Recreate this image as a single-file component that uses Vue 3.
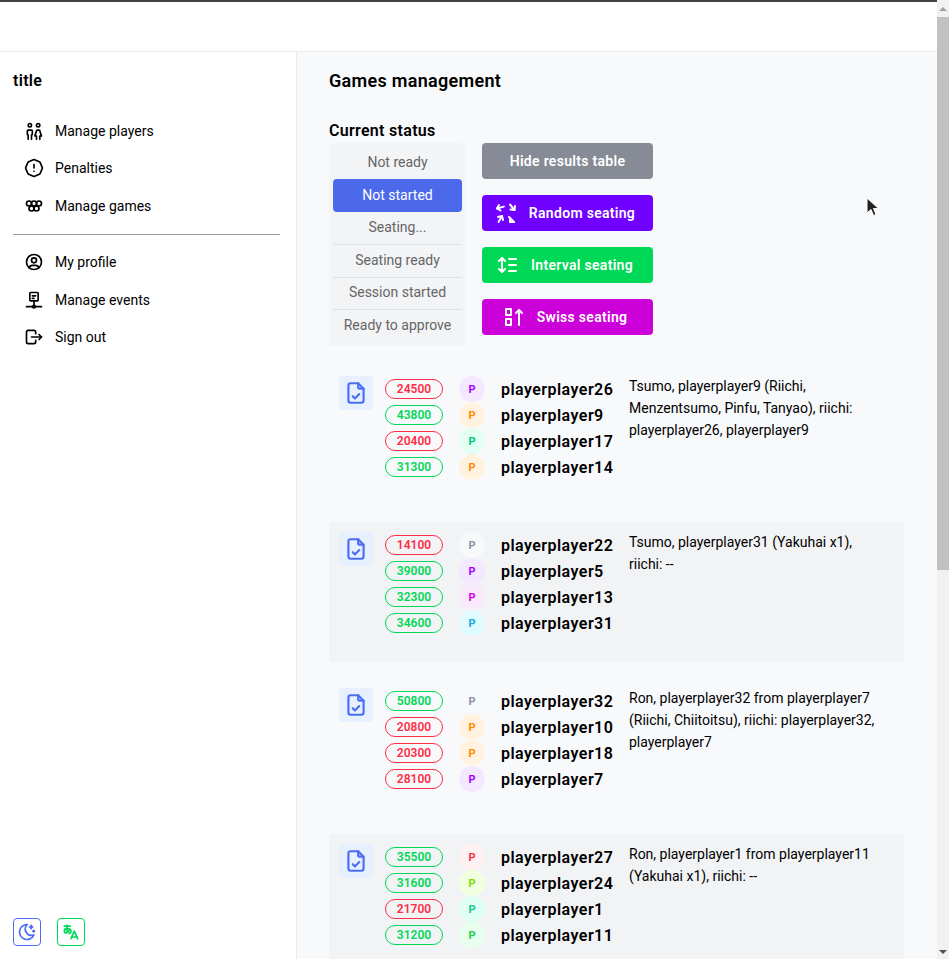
<template>
  <div class="page">
    <div class="topbar"></div>
    <div class="layout">
      <aside class="sidebar">
        <div class="side-title">title</div>
        <nav class="nav">
          <a v-for="item in navTop" :key="item.label" class="nav-item">
            <svg class="nav-icon" viewBox="0 0 24 24"><path v-for="d in icons[item.icon]" :key="d" :d="d" /></svg>
            <span>{{ item.label }}</span>
          </a>
        </nav>
        <div class="divider"></div>
        <nav class="nav">
          <a v-for="item in navBottom" :key="item.label" class="nav-item">
            <svg class="nav-icon" viewBox="0 0 24 24"><path v-for="d in icons[item.icon]" :key="d" :d="d" /></svg>
            <span>{{ item.label }}</span>
          </a>
        </nav>
        <div class="side-actions">
          <button class="square blue">
            <svg viewBox="0 0 24 24"><path v-for="d in icons.moon" :key="d" :d="d" /></svg>
          </button>
          <button class="square green">
            <svg viewBox="0 0 24 24"><path v-for="d in icons.lang" :key="d" :d="d" /></svg>
          </button>
        </div>
      </aside>

      <main class="main">
        <h2 class="heading">Games management</h2>
        <div class="status-title">Current status</div>
        <div class="controls">
          <div class="statuses">
            <div
              v-for="s in statuses"
              :key="s.label"
              class="status"
              :class="{ active: s.active, sep: s.sep }"
            >{{ s.label }}</div>
          </div>
          <div class="buttons">
            <button
              v-for="b in buttons"
              :key="b.label"
              class="action"
              :class="{ 'with-icon': b.icon }"
              :style="{ background: b.color }"
            >
              <svg v-if="b.icon" viewBox="0 0 24 24"><path v-for="d in icons[b.icon]" :key="d" :d="d" /></svg>
              <span>{{ b.label }}</span>
            </button>
          </div>
        </div>

        <div class="games">
          <div v-for="(g, i) in games" :key="i" class="game" :class="{ odd: i % 2 === 1 }">
            <div class="file-badge">
              <svg viewBox="0 0 24 24"><path v-for="d in icons.file" :key="d" :d="d" /></svg>
            </div>
            <div class="players">
              <div v-for="p in g.players" :key="p.name" class="player">
                <span class="pill" :class="p.score >= 30000 ? 'win' : 'lose'">{{ p.score }}</span>
                <span class="avatar" :style="{ background: p.bg, color: p.fg }">P</span>
                <span class="name">{{ p.name }}</span>
              </div>
            </div>
            <div class="outcome">{{ g.text }}</div>
          </div>
        </div>
      </main>
    </div>

    <div class="scrollbar">
      <div class="sb-arrow up"></div>
      <div class="sb-thumb"></div>
      <div class="sb-arrow down"></div>
    </div>
    <svg class="cursor" viewBox="0 0 14 22">
      <path d="M1 1v15l4-3.500 2.500 6 2.500-1-2.500-6h5z" fill="#222" stroke="#fff" stroke-width="1" />
    </svg>
  </div>
</template>

<script setup>
const icons = {
  friends: [
    'M7 5m-2 0a2 2 0 1 0 4 0a2 2 0 1 0 -4 0',
    'M5 22v-5l-1 -1v-4a1 1 0 0 1 1 -1h4a1 1 0 0 1 1 1v4l-1 1v5',
    'M17 5m-2 0a2 2 0 1 0 4 0a2 2 0 1 0 -4 0',
    'M15 22v-4h-2l2 -6a1 1 0 0 1 1 -1h2a1 1 0 0 1 1 1l2 6h-2v4'
  ],
  alert: [
    'M12.802 2.165l5.575 2.389c.48 .206 .863 .589 1.07 1.07l2.388 5.574c.22 .512 .22 1.092 0 1.604l-2.389 5.575c-.206 .48 -.589 .863 -1.07 1.07l-5.574 2.388c-.512 .22 -1.092 .22 -1.604 0l-5.575 -2.389a2.036 2.036 0 0 1 -1.07 -1.07l-2.388 -5.574a2.036 2.036 0 0 1 0 -1.604l2.389 -5.575c.206 -.48 .589 -.863 1.07 -1.07l5.574 -2.388a2.036 2.036 0 0 1 1.604 0z',
    'M12 8v4',
    'M12 16h.01'
  ],
  olympics: [
    'M6 9m-3 0a3 3 0 1 0 6 0a3 3 0 1 0 -6 0',
    'M18 9m-3 0a3 3 0 1 0 6 0a3 3 0 1 0 -6 0',
    'M12 9m-3 0a3 3 0 1 0 6 0a3 3 0 1 0 -6 0',
    'M9 15m-3 0a3 3 0 1 0 6 0a3 3 0 1 0 -6 0',
    'M15 15m-3 0a3 3 0 1 0 6 0a3 3 0 1 0 -6 0'
  ],
  user: [
    'M12 12m-9 0a9 9 0 1 0 18 0a9 9 0 1 0 -18 0',
    'M12 10m-3 0a3 3 0 1 0 6 0a3 3 0 1 0 -6 0',
    'M6.168 18.849a4 4 0 0 1 3.832 -2.849h4a4 4 0 0 1 3.834 2.855'
  ],
  events: [
    'M8 3h8a1 1 0 0 1 1 1v8a1 1 0 0 1 -1 1h-8a1 1 0 0 1 -1 -1v-8a1 1 0 0 1 1 -1z',
    'M10 7h4',
    'M10 10h2',
    'M12 13v5',
    'M12 20m-1.500 0a1.500 1.500 0 1 0 3 0a1.500 1.500 0 1 0 -3 0',
    'M3 20h7.500',
    'M13.500 20h7.500'
  ],
  logout: [
    'M14 8v-2a2 2 0 0 0 -2 -2h-7a2 2 0 0 0 -2 2v12a2 2 0 0 0 2 2h7a2 2 0 0 0 2 -2v-2',
    'M9 12h12l-3 -3',
    'M18 15l3 -3'
  ],
  file: [
    'M14 3v4a1 1 0 0 0 1 1h4',
    'M17 21h-10a2 2 0 0 1 -2 -2v-14a2 2 0 0 1 2 -2h7l5 5v11a2 2 0 0 1 -2 2z',
    'M9 15l2 2l4 -4'
  ],
  random: [
    'M20 21h-4v-4',
    'M20 21l-5 -5',
    'M6.500 9.504l-3.500 -2l2 -3.504',
    'M3 7.504l6.830 -1.870',
    'M4 16l4 -1l1 4',
    'M8 15l-3.500 6',
    'M21 5l-.5 4l-4 -.5',
    'M20.500 9l-4.500 -5.500'
  ],
  lineheight: [
    'M3 8l3 -3l3 3', 'M3 16l3 3l3 -3', 'M6 5v14',
    'M13 6h7', 'M13 12h7', 'M13 18h7'
  ],
  sort: [
    'M4 4h5v6h-5z', 'M4 14h5v6h-5z',
    'M17 20v-15', 'M14 8l3 -3l3 3'
  ],
  moon: [
    'M12 3c.132 0 .263 0 .393 0a7.500 7.500 0 0 0 7.920 12.446a9 9 0 1 1 -8.313 -12.454z',
    'M17 4a2 2 0 0 0 2 2a2 2 0 0 0 -2 2a2 2 0 0 0 -2 -2a2 2 0 0 0 2 -2',
    'M19 11h2m-1 -1v2'
  ],
  lang: [
    'M4 5h7',
    'M7 4c0 4.846 0 7 .5 8',
    'M10 8.500c0 2.286 -2 4.500 -3.500 4.500s-2.500 -1.135 -2.500 -2c0 -2 1 -3 3 -3s5 .57 5 2.500c0 1.500 -.5 2.500 -2 3.500',
    'M12 20l4 -9l4 9',
    'M19.100 18h-6.200'
  ]
}

const navTop = [
  { label: 'Manage players', icon: 'friends' },
  { label: 'Penalties', icon: 'alert' },
  { label: 'Manage games', icon: 'olympics' }
]
const navBottom = [
  { label: 'My profile', icon: 'user' },
  { label: 'Manage events', icon: 'events' },
  { label: 'Sign out', icon: 'logout' }
]

const statuses = [
  { label: 'Not ready' },
  { label: 'Not started', active: true },
  { label: 'Seating...' },
  { label: 'Seating ready', sep: true },
  { label: 'Session started', sep: true },
  { label: 'Ready to approve', sep: true }
]

const buttons = [
  { label: 'Hide results table', color: '#868b96' },
  { label: 'Random seating', color: '#7000ff', icon: 'random' },
  { label: 'Interval seating', color: '#00d858', icon: 'lineheight' },
  { label: 'Swiss seating', color: '#cc00d8', icon: 'sort' }
]

const violet = ['#f3e8ff', '#a800ff']
const orange = ['#fff3e0', '#ff8a00']
const teal = ['#e3fff3', '#00c87a']
const grey = ['#f8f9fa', '#8a94a6']
const magenta = ['#fae8fc', '#d400e8']
const cyan = ['#e0fbff', '#18a8d8']
const none = ['transparent', '#8a94a6']
const red = ['#fff0f2', '#f5304a']
const lime = ['#f0ffe0', '#80dc00']
const mint = ['#e0fff4', '#10c890']
const green = ['#e8ffee', '#20d050']

const p = (name, score, c) => ({ name, score, bg: c[0], fg: c[1] })

const games = [
  {
    players: [
      p('playerplayer26', 24500, violet),
      p('playerplayer9', 43800, orange),
      p('playerplayer17', 20400, teal),
      p('playerplayer14', 31300, orange)
    ],
    text: 'Tsumo, playerplayer9 (Riichi, Menzentsumo, Pinfu, Tanyao), riichi: playerplayer26, playerplayer9'
  },
  {
    players: [
      p('playerplayer22', 14100, grey),
      p('playerplayer5', 39000, violet),
      p('playerplayer13', 32300, magenta),
      p('playerplayer31', 34600, cyan)
    ],
    text: 'Tsumo, playerplayer31 (Yakuhai x1), riichi: --'
  },
  {
    players: [
      p('playerplayer32', 50800, none),
      p('playerplayer10', 20800, orange),
      p('playerplayer18', 20300, orange),
      p('playerplayer7', 28100, violet)
    ],
    text: 'Ron, playerplayer32 from playerplayer7 (Riichi, Chiitoitsu), riichi: playerplayer32, playerplayer7'
  },
  {
    players: [
      p('playerplayer27', 35500, red),
      p('playerplayer24', 31600, lime),
      p('playerplayer1', 21700, mint),
      p('playerplayer11', 31200, green)
    ],
    text: 'Ron, playerplayer1 from playerplayer11 (Yakuhai x1), riichi: --'
  }
]
</script>

<style>
html, body {
  height: 100%;
  overflow: hidden;
}
</style>

<style scoped>
.page {
  position: relative;
  width: 949px;
  height: 959px;
  overflow: hidden;
  background: #fff;
  font-family: Roboto, "Noto Sans", "Liberation Sans", sans-serif;
  font-size: 14px;
  color: #000;
}

.topbar {
  width: 937px;
  height: 52px;
  box-sizing: border-box;
  border-top: 2px solid #444;
  border-bottom: 1px solid #e9ecef;
}

.layout {
  display: flex;
  width: 937px;
  height: 907px;
}

.sidebar {
  width: 297px;
  flex: none;
  box-sizing: border-box;
  border-right: 1px solid #e9ecef;
  padding: 0 16px 0 13px;
  position: relative;
  display: flex;
  flex-direction: column;
}

.side-title {
  font-size: 16px;
  font-weight: 600;
  letter-spacing: 0.3px;
  margin-top: 18px;
  line-height: 22px;
}

.nav {
  display: flex;
  flex-direction: column;
}

.side-title + .nav {
  margin-top: 20px;
}

.nav-item {
  display: flex;
  align-items: center;
  gap: 11px;
  height: 37.5px;
  padding-left: 11px;
}

.nav-icon {
  width: 20px;
  height: 20px;
  fill: none;
  stroke: #000;
  stroke-width: 2;
  stroke-linecap: round;
  stroke-linejoin: round;
}

.divider {
  height: 1px;
  background: #999;
  margin: 9px 0;
}

.side-actions {
  margin-top: auto;
  margin-bottom: 13px;
  display: flex;
  gap: 16px;
}

.square {
  width: 28px;
  height: 28px;
  padding: 0;
  border-radius: 4px;
  background: transparent;
  display: flex;
  align-items: center;
  justify-content: center;
}

.square svg {
  width: 20px;
  height: 20px;
  fill: none;
  stroke: currentColor;
  stroke-width: 2;
  stroke-linecap: round;
  stroke-linejoin: round;
}

.square.blue {
  border: 1px solid #4c6ef5;
  color: #4c6ef5;
}

.square.green {
  border: 1px solid #00d858;
  color: #00d858;
}

.main {
  flex: 1;
  background: #f8f9fb;
  padding: 0 33px 0 32px;
  min-width: 0;
}

.heading {
  margin: 17px 0 0;
  font-size: 18px;
  line-height: 24px;
  font-weight: 600;
  letter-spacing: 0.3px;
}

.status-title {
  margin-top: 27px;
  font-size: 16px;
  line-height: 22px;
  font-weight: 600;
  letter-spacing: 0.3px;
}

.controls {
  display: flex;
  gap: 16px;
  align-items: flex-start;
  margin-top: 1px;
}

.statuses {
  width: 137px;
  height: 203px;
  box-sizing: border-box;
  padding: 4px;
  background: #f3f4f6;
  border-radius: 4px;
}

.status {
  height: 32.4px;
  box-sizing: border-box;
  padding-bottom: 2px;
  display: flex;
  align-items: center;
  justify-content: center;
  color: #666;
  white-space: nowrap;
}

.status.sep {
  border-top: 1px solid #dee2e6;
}

.status.active {
  background: #4c69ec;
  color: #fff;
  border-radius: 4px;
}

.buttons {
  width: 171px;
  display: flex;
  flex-direction: column;
  gap: 16px;
}

.action {
  height: 36px;
  border: 0;
  border-radius: 4px;
  color: #fff;
  font: inherit;
  font-weight: 600;
  letter-spacing: 0.3px;
  display: flex;
  align-items: center;
  justify-content: center;
  gap: 11px;
  padding: 0;
}

.action.with-icon {
  padding-right: 6px;
}

.action svg {
  width: 24px;
  height: 24px;
  fill: none;
  stroke: #fff;
  stroke-width: 2;
  stroke-linecap: round;
  stroke-linejoin: round;
}

.games {
  margin-top: 20px;
  display: flex;
  flex-direction: column;
  gap: 16px;
}

.game {
  height: 140px;
  flex: none;
  box-sizing: border-box;
  padding: 10px;
  display: flex;
  align-items: flex-start;
  gap: 12px;
}

.game.odd {
  background: #f2f3f5;
}

.file-badge {
  width: 34px;
  height: 34px;
  flex: none;
  border-radius: 4px;
  background: #e7f0ff;
  display: flex;
  align-items: center;
  justify-content: center;
  color: #4c6ef5;
}

.file-badge svg {
  width: 26px;
  height: 26px;
  fill: none;
  stroke: currentColor;
  stroke-width: 2;
  stroke-linecap: round;
  stroke-linejoin: round;
}

.players {
  width: 232px;
  flex: none;
}

.player {
  height: 26px;
  display: flex;
  align-items: center;
}

.pill {
  width: 58px;
  height: 20px;
  box-sizing: border-box;
  border-radius: 10px;
  border: 1px solid;
  display: flex;
  align-items: center;
  justify-content: center;
  font-size: 12px;
  font-weight: 600;
  margin-right: 16px;
}

.pill.win {
  color: #00d858;
  border-color: #00d858;
}

.pill.lose {
  color: #ff2d46;
  border-color: #ff2d46;
}

.avatar {
  width: 26px;
  height: 26px;
  border-radius: 50%;
  display: flex;
  align-items: center;
  justify-content: center;
  font-size: 11px;
  font-weight: 700;
  margin-right: 16px;
}

.name {
  font-size: 16px;
  font-weight: 600;
  letter-spacing: 0.45px;
  white-space: nowrap;
}

.outcome {
  flex: 1;
  max-width: 256px;
  line-height: 22px;
  margin-top: -1px;
}

.scrollbar {
  position: absolute;
  top: 0;
  right: 0;
  bottom: 0;
  width: 12px;
  background: #f1f1f1;
  display: flex;
  flex-direction: column;
  align-items: center;
}

.sb-thumb {
  width: 12px;
  height: 553px;
  background: #c1c1c1;
}

.sb-arrow {
  width: 0;
  height: 0;
  border-left: 4px solid transparent;
  border-right: 4px solid transparent;
}

.sb-arrow.up {
  border-bottom: 4px solid #a0a0a0;
  margin: 7px 0 6px;
}

.sb-arrow.down {
  border-top: 4px solid #505050;
  margin-top: auto;
  margin-bottom: 5px;
}

.cursor {
  position: absolute;
  left: 866px;
  top: 197px;
  width: 14px;
  height: 22px;
}
</style>
